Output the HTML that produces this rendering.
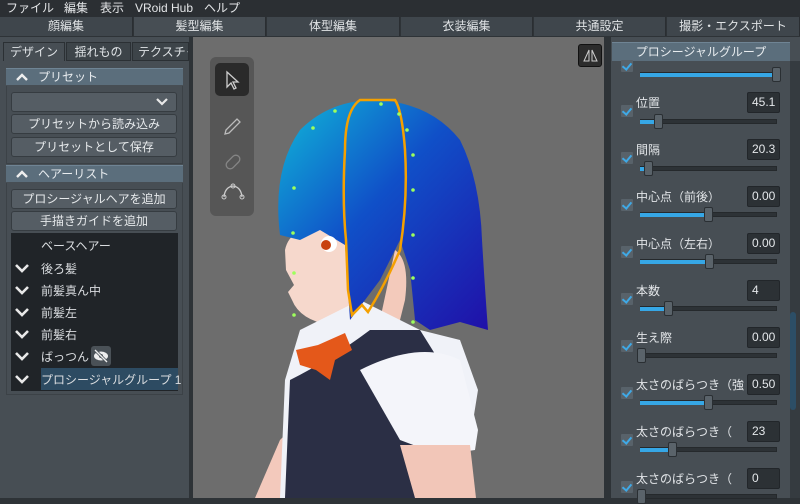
<!DOCTYPE html>
<html><head><meta charset="utf-8"><style>
*{margin:0;padding:0;box-sizing:border-box}
body{width:800px;height:498px;overflow:hidden;background:#2e3337;font-family:"Liberation Sans","Noto Sans CJK JP",sans-serif;font-size:12px;color:#dfe3e6;position:relative}
.abs{position:absolute}
.menu{left:0;top:0;width:800px;height:17px;background:#2b2f33;}
.menu span{position:absolute;top:0;font-size:12px;color:#e4e6e8;line-height:16px}
.tab{position:absolute;top:17px;height:19px;background:#3f464c;border-right:1px solid #2a2e32;text-align:center;line-height:19px;color:#e0e3e5;font-size:12px}
.lp{left:0;top:37px;width:189px;height:461px;background:#474e54}
.st{position:absolute;top:42px;height:19px;line-height:19px;font-size:12px;text-align:center;background:#3d4449;border:1px solid #2b3034}
.hdr{position:absolute;left:6px;width:177px;height:17px;background:#5b6e7c;border-top:1px solid #6f8494;color:#e8ecef;line-height:16px;font-size:12px}
.hdr svg{position:absolute;left:10px;top:4px}
.hdr span{position:absolute;left:32px;top:0}
.btn{position:absolute;left:11px;width:166px;height:20px;background:#555d64;border:1px solid #363c41;border-radius:3px;text-align:center;line-height:18px;font-size:12px;color:#e6e9eb}
.list{left:11px;top:233px;width:167px;height:158px;background:#202428}
.li{position:absolute;left:41px;font-size:12px;color:#dadde0;line-height:16px}
.chev{position:absolute;left:15px;width:14px;height:10px}
.vp{left:193px;top:37px;width:411px;height:461px;background:#6d6d6d;overflow:hidden}
.rp{left:611px;top:37px;width:189px;height:461px;background:#474e54}
.lab{position:absolute;left:636px;font-size:12px;color:#e2e5e8;line-height:14px}
.val{position:absolute;left:747px;width:33px;height:21px;background:#2c3135;border:1px solid #22262a;border-radius:2px;color:#e4e7ea;font-size:12px;line-height:19px;padding-left:4px}
.cb{position:absolute;left:621px;width:12px;height:12px;background:#58626a;border-radius:1px}
.cb:after{content:"";position:absolute;left:3px;top:1px;width:4px;height:7px;border:solid #3fa9e6;border-width:0 2px 2px 0;transform:rotate(40deg)}
.tr{position:absolute;left:640px;width:137px;height:5px;background:#2d3236;border:1px solid #25292c}
.fill{position:absolute;left:640px;height:4px;background:#36a7e6}
.hd{position:absolute;width:9px;height:15px;background:#5a636a;border:1px solid #2a2f33;border-radius:2px}
</style></head><body>
<div class="abs menu">
<span style="left:6px">ファイル</span><span style="left:64px">編集</span><span style="left:100px">表示</span><span style="left:135px">VRoid Hub</span><span style="left:204px">ヘルプ</span>
</div>
<div class="tab" style="left:0;width:133px">顔編集</div>
<div class="tab" style="left:134px;width:132px;background:#474e54">髪型編集</div>
<div class="tab" style="left:267px;width:133px">体型編集</div>
<div class="tab" style="left:401px;width:132px">衣装編集</div>
<div class="tab" style="left:534px;width:132px">共通設定</div>
<div class="tab" style="left:667px;width:133px">撮影・エクスポート</div>

<div class="abs lp"></div>
<div class="st" style="left:3px;width:62px;background:#474e54;border-bottom:none">デザイン</div>
<div class="st" style="left:66px;width:65px">揺れもの</div>
<div class="st" style="left:132px;width:57px;overflow:hidden;white-space:nowrap;text-align:left;padding-left:5px">テクスチャ</div>
<div class="hdr" style="top:68px"><svg width="12" height="8"><path d="M1 7 L6 2 L11 7" stroke="#eee" stroke-width="2.4" fill="none"/></svg><span>プリセット</span></div>
<div class="abs" style="left:6px;top:86px;width:177px;height:78px;border:1px solid #3c4247;border-top:none"></div>
<div class="btn" style="top:92px"><svg class="abs" style="left:144px;top:5px" width="12" height="8"><path d="M1 1 L6 6 L11 1" stroke="#e8e8e8" stroke-width="2.2" fill="none"/></svg></div>
<div class="btn" style="top:114px">プリセットから読み込み</div>
<div class="btn" style="top:137px">プリセットとして保存</div>
<div class="hdr" style="top:165px"><svg width="12" height="8"><path d="M1 7 L6 2 L11 7" stroke="#eee" stroke-width="2.4" fill="none"/></svg><span>ヘアーリスト</span></div>
<div class="abs" style="left:6px;top:183px;width:177px;height:212px;border:1px solid #3c4247;border-top:none"></div>
<div class="btn" style="top:189px">プロシージャルヘアを追加</div>
<div class="btn" style="top:211px">手描きガイドを追加</div>
<div class="abs list"></div>
<div class="abs" style="left:41px;top:368px;width:137px;height:22px;background:#2d4b62"></div>
<div class="li" style="top:238px">ベースヘアー</div>
<div class="li" style="top:261px">後ろ髪</div>
<div class="li" style="top:283px">前髪真ん中</div>
<div class="li" style="top:305px">前髪左</div>
<div class="li" style="top:327px">前髪右</div>
<div class="li" style="top:349px">ばっつん</div>
<div class="li" style="top:372px">プロシージャルグループ 1</div>
<svg class="chev" style="top:263px" viewBox="0 0 14 10"><path d="M1 2 L7 8 L13 2" stroke="#e8e8e8" stroke-width="2.6" fill="none"/></svg>
<svg class="chev" style="top:285px" viewBox="0 0 14 10"><path d="M1 2 L7 8 L13 2" stroke="#e8e8e8" stroke-width="2.6" fill="none"/></svg>
<svg class="chev" style="top:307px" viewBox="0 0 14 10"><path d="M1 2 L7 8 L13 2" stroke="#e8e8e8" stroke-width="2.6" fill="none"/></svg>
<svg class="chev" style="top:329px" viewBox="0 0 14 10"><path d="M1 2 L7 8 L13 2" stroke="#e8e8e8" stroke-width="2.6" fill="none"/></svg>
<svg class="chev" style="top:351px" viewBox="0 0 14 10"><path d="M1 2 L7 8 L13 2" stroke="#e8e8e8" stroke-width="2.6" fill="none"/></svg>
<svg class="chev" style="top:374px" viewBox="0 0 14 10"><path d="M1 2 L7 8 L13 2" stroke="#e8e8e8" stroke-width="2.6" fill="none"/></svg>
<div class="abs" style="left:91px;top:346px;width:20px;height:20px;background:#4a5157;border-radius:3px"><svg width="20" height="20"><ellipse cx="10" cy="10" rx="7" ry="4.5" fill="#eee"/><circle cx="10" cy="10" r="2" fill="#4a5157"/><path d="M4 4 L16 16" stroke="#4a5157" stroke-width="3"/><path d="M4 4 L16 16" stroke="#eee" stroke-width="1.3"/></svg></div>
<div class="abs" style="left:189px;top:37px;width:4px;height:461px;background:#2e3337"></div>

<div class="abs vp">
<svg width="411" height="461" viewBox="193 37 411 461">
<defs><linearGradient id="hg" x1="0" y1="0" x2="1" y2="1"><stop offset="0" stop-color="#10b8d8"/><stop offset="0.45" stop-color="#1050c8"/><stop offset="1" stop-color="#2010a8"/></linearGradient></defs>
<path d="M280 440 L300 420 L290 498 L255 498 Z" fill="#f3c9bc"/>
<path d="M285 250 Q290 225 330 225 L360 230 L362 320 L330 325 Q300 320 292 300 L288 292 L294 285 L286 270 Z" fill="#f6d8cc"/>
<path d="M395 250 Q410 260 405 300 L400 320 L380 320 Z" fill="#f3cabb"/>
<path d="M300 330 L360 300 L420 330 L460 340 L478 390 L470 440 L440 450 L440 498 L280 498 L285 380 Z" fill="#f0f2f8"/>
<path d="M290 380 Q330 360 370 330 L420 330 L445 370 L430 420 L440 498 L285 498 Z" fill="#2b2f45"/>
<path d="M360 370 Q420 340 460 360 L478 430 L475 450 L440 455 L400 440 Z" fill="#f4f5fa"/>
<path d="M400 445 L470 445 L476 498 L415 498 Z" fill="#f2c6b8"/>
<path d="M296 350 L318 345 L345 333 L352 350 L335 360 L330 380 L316 370 L300 365 Z" fill="#e4581a"/>
<path d="M280 235 Q272 170 300 130 Q330 100 375 100 Q430 102 460 140 Q480 180 482 240 Q485 290 488 330 L460 322 L430 330 L415 320 L410 270 L400 240 L380 280 L350 320 L345 245 L320 230 L300 240 Z" fill="url(#hg)"/>
<path d="M360 100 Q345 110 345 150 Q342 200 346 240 L348 290 L352 315 L362 305 L368 312 Q385 285 400 250 Q408 200 405 150 Q402 110 395 100 Z" fill="none" stroke="#f4a000" stroke-width="2.5"/>
<circle cx="329" cy="244" r="8" fill="#fff"/><circle cx="326" cy="245" r="5" fill="#c8400e"/>
<g fill="#9dff5c"><circle cx="313" cy="128" r="1.8"/><circle cx="294" cy="188" r="1.8"/><circle cx="293" cy="233" r="1.8"/><circle cx="294" cy="273" r="1.8"/><circle cx="294" cy="315" r="1.8"/><circle cx="381" cy="104" r="1.8"/><circle cx="399" cy="114" r="1.8"/><circle cx="407" cy="130" r="1.8"/><circle cx="413" cy="155" r="1.8"/><circle cx="413" cy="190" r="1.8"/><circle cx="413" cy="235" r="1.8"/><circle cx="413" cy="278" r="1.8"/><circle cx="413" cy="322" r="1.8"/><circle cx="335" cy="111" r="1.8"/></g>
</svg>
<div class="abs" style="left:17px;top:20px;width:44px;height:159px;background:#565656;border-radius:6px"></div>
<div class="abs" style="left:22px;top:26px;width:34px;height:33px;background:#2a2a2a;border-radius:5px"></div>
<svg class="abs" style="left:22px;top:26px" width="34" height="140"><path d="M12 9 L12 24 L16 20 L19 26 L21 25 L18 19 L23 19 Z" stroke="#ccc" stroke-width="1.3" fill="none"/><path d="M11 67 L22 56 L25 59 L14 70 L10 71 Z" stroke="#bbb" stroke-width="1.3" fill="none"/><rect x="10" y="95" width="16" height="8" rx="4" transform="rotate(-45 18 99)" stroke="#858585" stroke-width="1.3" fill="none"/><path d="M9 134 Q10 124 18 123 Q26 124 27 134" stroke="#ccc" stroke-width="1.3" fill="none"/><circle cx="9" cy="134" r="2" fill="none" stroke="#ccc"/><circle cx="27" cy="134" r="2" fill="none" stroke="#ccc"/><circle cx="18" cy="123" r="2" fill="none" stroke="#ccc"/></svg>
<div class="abs" style="left:385px;top:7px;width:24px;height:23px;background:#2c2c2c;border:1px solid #111;border-radius:3px"><svg width="22" height="21"><path d="M10 5 L10 16 L5 16 Z M13 5 L13 16 L18 16 Z" stroke="#ccc" fill="none"/></svg></div>
</div>
<div class="abs" style="left:604px;top:37px;width:7px;height:461px;background:#2e3337"></div>

<div class="abs rp"></div>
<div class="abs" style="left:612px;top:42px;width:178px;height:19px;background:#5b6e7c;border-top:1px solid #6f8494;text-align:center;line-height:18px;color:#e8ecef">プロシージャルグループ</div>
<div class="abs" style="left:790px;top:61px;width:10px;height:437px;background:#353b40"></div>
<div class="abs" style="left:790px;top:312px;width:6px;height:98px;background:#2c4e66;border-radius:3px"></div>
<div class="cb" style="top:60px"></div>
<div class="tr" style="top:72px"></div><div class="fill" style="top:73px;width:136px"></div><div class="hd" style="left:772px;top:67px"></div>

<div class="cb" style="top:105px"></div><div class="lab" style="top:96px">位置</div><div class="val" style="top:92px">45.1</div>
<div class="tr" style="top:119px"></div><div class="fill" style="top:120px;width:18px"></div><div class="hd" style="left:654px;top:114px"></div>

<div class="cb" style="top:152px"></div><div class="lab" style="top:143px">間隔</div><div class="val" style="top:139px">20.3</div>
<div class="tr" style="top:166px"></div><div class="fill" style="top:167px;width:6px"></div><div class="hd" style="left:644px;top:161px"></div>

<div class="cb" style="top:199px"></div><div class="lab" style="top:190px">中心点（前後）</div><div class="val" style="top:186px">0.00</div>
<div class="tr" style="top:212px"></div><div class="fill" style="top:213px;width:66px"></div><div class="hd" style="left:704px;top:207px"></div>

<div class="cb" style="top:246px"></div><div class="lab" style="top:237px">中心点（左右）</div><div class="val" style="top:233px">0.00</div>
<div class="tr" style="top:259px"></div><div class="fill" style="top:260px;width:66px"></div><div class="hd" style="left:705px;top:254px"></div>

<div class="cb" style="top:293px"></div><div class="lab" style="top:284px">本数</div><div class="val" style="top:280px">4</div>
<div class="tr" style="top:306px"></div><div class="fill" style="top:307px;width:26px"></div><div class="hd" style="left:664px;top:301px"></div>

<div class="cb" style="top:340px"></div><div class="lab" style="top:331px">生え際</div><div class="val" style="top:327px">0.00</div>
<div class="tr" style="top:353px"></div><div class="hd" style="left:637px;top:348px"></div>

<div class="cb" style="top:387px"></div><div class="lab" style="top:378px">太さのばらつき（強</div><div class="val" style="top:374px">0.50</div>
<div class="tr" style="top:400px"></div><div class="fill" style="top:401px;width:66px"></div><div class="hd" style="left:704px;top:395px"></div>

<div class="cb" style="top:434px"></div><div class="lab" style="top:425px">太さのばらつき（</div><div class="val" style="top:421px">23</div>
<div class="tr" style="top:447px"></div><div class="fill" style="top:448px;width:30px"></div><div class="hd" style="left:668px;top:442px"></div>

<div class="cb" style="top:481px"></div><div class="lab" style="top:472px">太さのばらつき（</div><div class="val" style="top:468px">0</div>
<div class="tr" style="top:494px"></div><div class="hd" style="left:637px;top:489px"></div>
</body></html>
